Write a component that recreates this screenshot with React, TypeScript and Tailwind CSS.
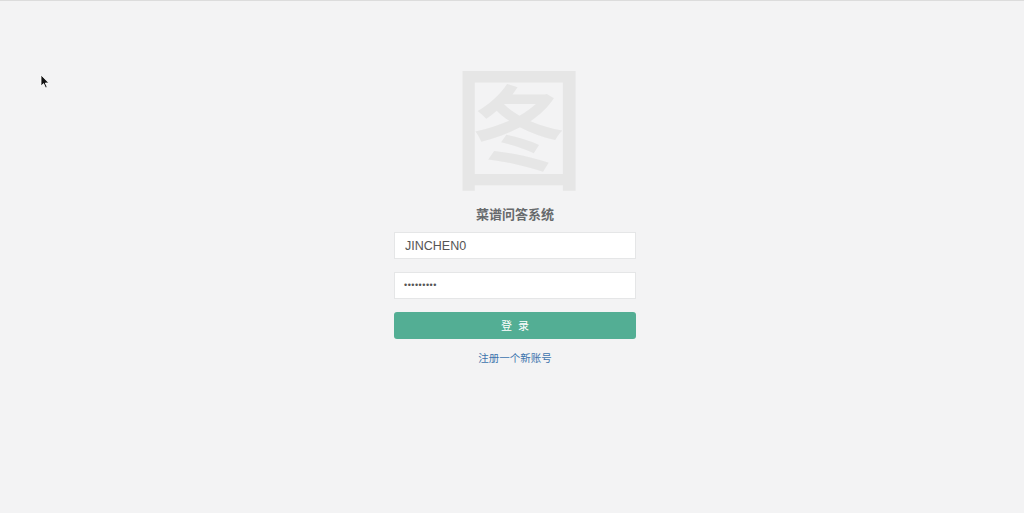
export default function App() {
  return (
    <div
      className="relative min-h-[513px] w-full bg-[#f3f3f4] border-t border-[#dcdcdc] flex justify-center"
      style={{ fontFamily: '"Helvetica Neue", "Liberation Sans", Arial, "Noto Sans CJK SC", sans-serif' }}
    >
      {/* cursor */}
      <svg className="absolute left-[40px] top-[73px]" width="10" height="15" viewBox="0 0 10 15">
        <path d="M1 1 L1 12 L3.6 9.6 L5.6 14 L7.2 13.3 L5.3 9 L8.8 9 Z" fill="#111" stroke="#fff" strokeWidth="0.8" />
      </svg>

      <div className="ml-[6px] w-[242px] flex flex-col items-center pt-[50px]">
        <h1
          className="pl-[8px] text-[134px] leading-[140px] font-medium text-[#e6e6e6] select-none"
          style={{ fontFamily: '"Noto Sans CJK SC", sans-serif' }}
        >
          图
        </h1>
        <h3
          className="mt-[12px] text-[13px] leading-[21px] font-bold text-[#676a6c]"
          style={{ fontFamily: '"Noto Sans CJK SC", sans-serif' }}
        >
          菜谱问答系统
        </h3>
        <form className="w-full mt-[8px] flex flex-col">
          <input
            readOnly
            value="JINCHEN0"
            className="h-[27px] w-full bg-white border border-[#e5e6e7] px-[10px] text-[12.5px] text-[#555] outline-none"
          />
          <div className="mt-[13px] h-[27px] w-full bg-white border border-[#e5e6e7] px-[9px] flex items-center text-[9px] tracking-[0.5px] text-[#555]">
            •••••••••
          </div>
          <button
            type="button"
            className="mt-[13px] h-[27px] w-full rounded-[3px] bg-[#53ae94] pl-[6px] text-white text-[11px] tracking-[6px]"
            style={{ fontFamily: '"Noto Sans CJK SC", sans-serif' }}
          >
            登录
          </button>
          <a
            href="#"
            className="mt-[11px] text-center text-[10.5px] text-[#3d74ad]"
            style={{ fontFamily: '"Noto Sans CJK SC", sans-serif' }}
          >
            注册一个新账号
          </a>
        </form>
      </div>
    </div>
  );
}
